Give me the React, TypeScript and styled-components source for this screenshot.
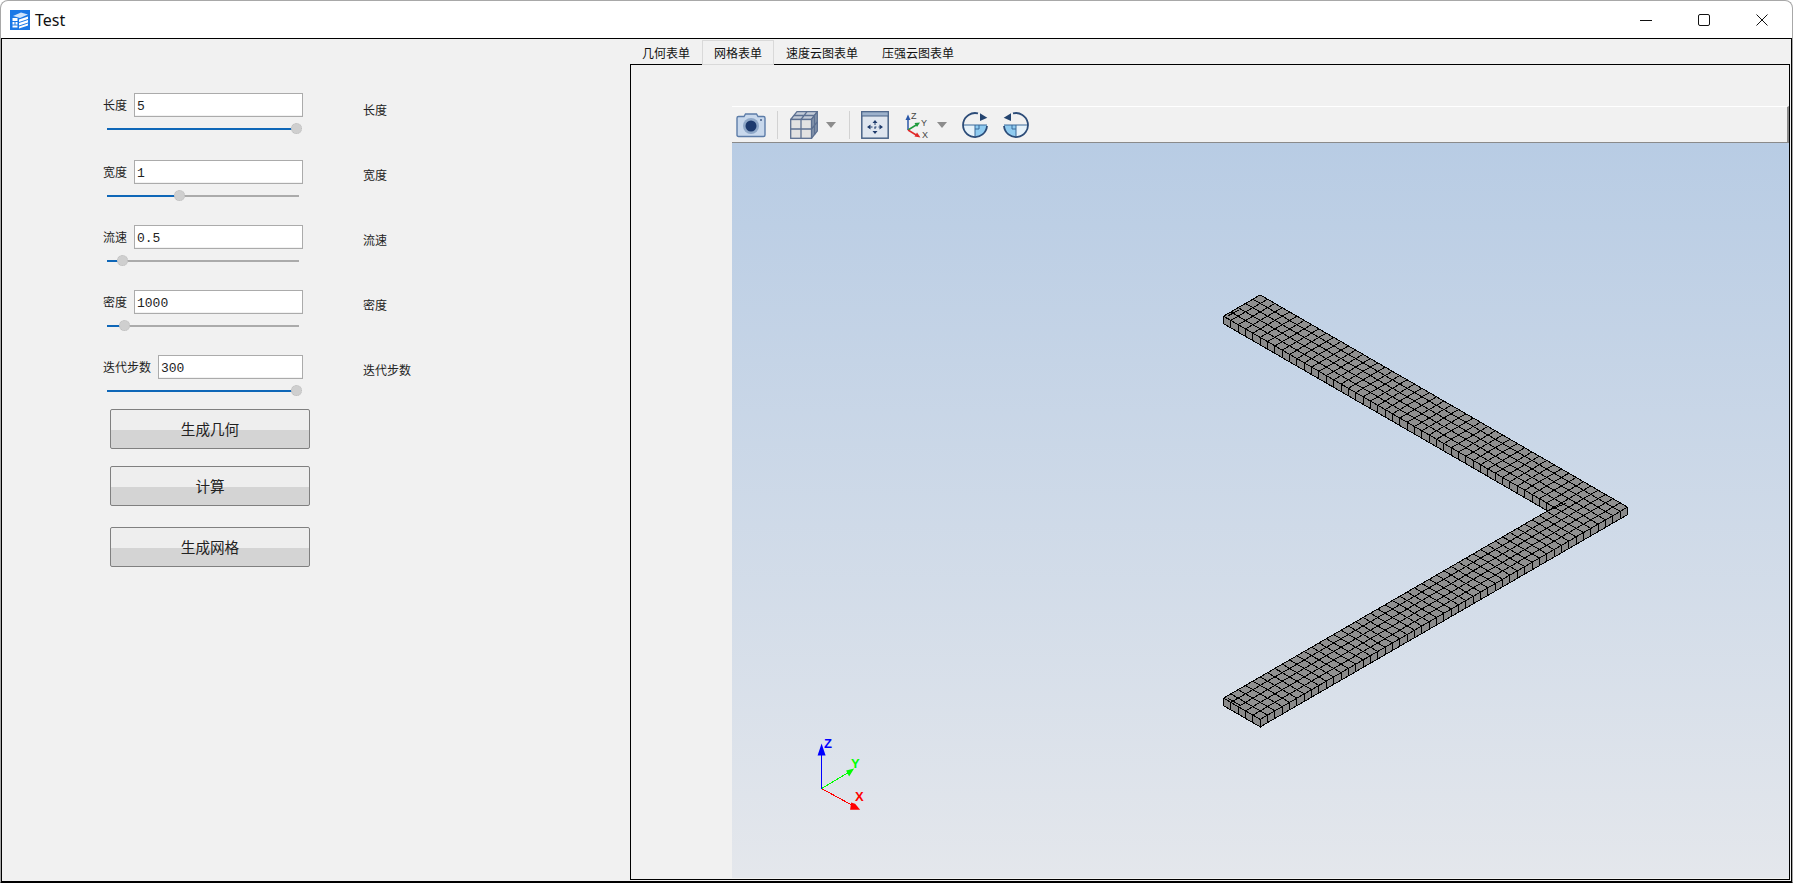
import React from "react";
import styled, { createGlobalStyle } from "styled-components";

const CJK = `"Noto Sans CJK SC", "Noto Sans", sans-serif`;

const Global = createGlobalStyle`
  html, body { margin: 0; padding: 0; background: #ffffff; overflow: hidden; }
  * { box-sizing: border-box; }
`;

const Frame = styled.div`
  width: 1793px;
  height: 883px;
  display: flex;
  flex-direction: column;
  border: 1px solid #a8a8a8;
  border-bottom-color: #000;
  border-radius: 8px 8px 0 0;
  background: #fff;
  overflow: hidden;
`;

const TitleBar = styled.header`
  height: 37px;
  flex: none;
  display: flex;
  align-items: center;
  padding-left: 9px;
`;

const AppIcon = styled.svg`
  width: 20px;
  height: 20px;
  flex: none;
`;

const AppTitle = styled.span`
  margin-left: 5px;
  font: 16px/20px "Noto Sans", sans-serif;
  color: #111;
`;

const WindowControls = styled.div`
  margin-left: auto;
  display: flex;
  align-items: center;
  padding-right: 24px;
  gap: 46px;
`;

const WindowGlyph = styled.svg`
  width: 12px;
  height: 12px;
  display: block;
`;

const Body = styled.main`
  flex: 1;
  min-height: 0;
  display: flex;
  border: 1px solid #000;
  background: #f1f1f1;
`;

const LeftPanel = styled.section`
  width: 628px;
  flex: none;
  padding: 54px 0 0 101px;
  background: #f1f1f1;
`;

const ControlRow = styled.div<{ $height: number }>`
  height: ${(p) => p.$height}px;
  display: flex;
  align-items: flex-start;
`;

const Field = styled.div`
  width: 200px;
  flex: none;
`;

const FieldHead = styled.div`
  display: flex;
  align-items: center;
  gap: 7px;
`;

const FieldLabel = styled.label`
  font: 12px/16px ${CJK};
  color: #222;
  white-space: nowrap;
`;

const FieldInput = styled.input`
  flex: 1;
  min-width: 0;
  height: 24px;
  padding: 3px 2px 0;
  border: 1px solid #ababab;
  box-shadow: inset 0 -1px 0 #f2f2f2;
  outline: none;
  background: #fff;
  color: #222;
  font: 13px/20px "Liberation Mono", monospace;
`;

const Slider = styled.div`
  position: relative;
  width: 192px;
  height: 12px;
  margin: 6px 0 0 4px;
`;

const SliderTrack = styled.div`
  position: absolute;
  left: 0;
  right: 0;
  top: 5px;
  height: 2px;
  background: #ababab;
`;

const SliderFill = styled.div`
  height: 100%;
  background: #0f67b8;
`;

const SliderThumb = styled.div`
  position: absolute;
  top: 0;
  width: 11px;
  height: 11px;
  margin-left: -5px;
  border-radius: 50%;
  background: #cfcfcf;
  border: 1px dotted #bdbdbd;
`;

const SideLabel = styled.span<{ $top: number }>`
  margin: ${(p) => p.$top}px 0 0 60px;
  font: 12px/16px ${CJK};
  color: #222;
  white-space: nowrap;
`;

const ActionButton = styled.button<{ $top: number }>`
  display: block;
  width: 200px;
  height: 40px;
  margin: ${(p) => p.$top}px 0 0 7px;
  padding: 0;
  border: 1px solid #808080;
  border-radius: 2px;
  background: linear-gradient(#eeeeee 0, #eeeeee 20px, #d4d4d4 20px, #d4d4d4 100%);
  color: #222;
  font: 14.6px/20px ${CJK};
`;

const RightPanel = styled.section`
  flex: 1;
  min-width: 0;
  display: flex;
  flex-direction: column;
  padding: 0 1px 1px 0;
`;

const TabBar = styled.nav`
  height: 25px;
  flex: none;
  display: flex;
  align-items: flex-end;
`;

const Tab = styled.div<{ $active?: boolean }>`
  position: relative;
  z-index: 1;
  height: 25px;
  margin-bottom: -1px;
  padding: 0 11px;
  border: 1px solid ${(p) => (p.$active ? "#d9d9d9" : "transparent")};
  background: ${(p) => (p.$active ? "#f1f1f1" : "transparent")};
  color: #111;
  font: 12px/24px ${CJK};
  white-space: nowrap;
`;

const Pane = styled.div`
  flex: 1;
  min-height: 0;
  display: flex;
  flex-direction: column;
  border: 1px solid #000;
  padding: 41px 0 1px 101px;
  background: #f1f1f1;
`;

const Toolbar = styled.div`
  height: 37px;
  flex: none;
  display: flex;
  align-items: center;
  padding-left: 4px;
  border-top: 1px solid #fff;
  border-bottom: 1px solid #8a8a8a;
  border-right: 2px solid #8a8a8a;
  background: #f1f1f1;
`;

const ToolSlot = styled.span<{ $left: number }>`
  display: flex;
  flex: none;
  margin-left: ${(p) => p.$left}px;
`;

const ToolSeparator = styled.span<{ $left: number }>`
  width: 1px;
  height: 28px;
  flex: none;
  margin-left: ${(p) => p.$left}px;
  background: #d2d2d2;
`;

const DropArrow = styled.span<{ $left: number }>`
  flex: none;
  width: 0;
  height: 0;
  margin-left: ${(p) => p.$left}px;
  border-left: 5px solid transparent;
  border-right: 5px solid transparent;
  border-top: 6px solid #8c8c8c;
`;

const ToolIcon = styled.svg<{ $flip?: boolean }>`
  display: block;
  transform: ${(p) => (p.$flip ? "scaleX(-1)" : "none")};
`;

const Canvas = styled.div`
  flex: 1;
  min-height: 0;
  background: linear-gradient(#b8cce4, #e4e7ec);
`;

const Scene = styled.svg`
  display: block;
  width: 100%;
  height: 100%;
`;

/* mesh geometry */
const A = { x: 1223, y: 316 };
const U = { x: 7.34, y: 4.24 };
const V = { x: 7.34, y: -4.24 };
const T = 7.5;
const P = (i: number, j: number, drop = 0) =>
  `${(A.x + i * U.x + j * V.x).toFixed(2)} ${(A.y + i * U.y + j * V.y + drop).toFixed(2)}`;

const topOutline = `M${P(0, 0)}L${P(0, 5)}L${P(50, 5)}L${P(50, -45)}L${P(45, -45)}L${P(45, 0)}Z`;

const buildGrid = () => {
  let d = "";
  for (let j = 1; j <= 4; j++) d += `M${P(0, j)}L${P(50, j)}`;
  for (let i = 1; i <= 44; i++) d += `M${P(i, 0)}L${P(i, 5)}`;
  for (let i = 46; i <= 49; i++) d += `M${P(i, -45)}L${P(i, 5)}`;
  for (let j = -44; j <= 0; j++) d += `M${P(45, j)}L${P(50, j)}`;
  d += `M${P(45, 0)}L${P(45, 5)}`;
  return d;
};

const buildSides = () => {
  let d = "";
  const quad = (a: [number, number], b: [number, number]) => {
    d += `M${P(a[0], a[1])}L${P(b[0], b[1])}L${P(b[0], b[1], T)}L${P(a[0], a[1], T)}Z`;
  };
  for (let i = 0; i < 45; i++) quad([i, 0], [i + 1, 0]);
  for (let i = 45; i < 50; i++) quad([i, -45], [i + 1, -45]);
  for (let j = -45; j < 5; j++) quad([50, j], [50, j + 1]);
  return d;
};

const gridPath = buildGrid();
const sidePath = buildSides();

const controls = [
  { label: "长度", value: "5", fill: 189, height: 67, side: 9 },
  { label: "宽度", value: "1", fill: 72, height: 65, side: 7 },
  { label: "流速", value: "0.5", fill: 15, height: 65, side: 7 },
  { label: "密度", value: "1000", fill: 17, height: 65, side: 7 },
  { label: "迭代步数", value: "300", fill: 189, height: 54, side: 7 },
];

const actions = [
  { label: "生成几何", top: 0 },
  { label: "计算", top: 17 },
  { label: "生成网格", top: 21 },
];

const tabs = ["几何表单", "网格表单", "速度云图表单", "压强云图表单"];

const RotateGlyph: React.FC<{ flip?: boolean }> = ({ flip }) => (
  <ToolIcon $flip={flip} width="28" height="28" viewBox="0 0 28 28">
    <path d="M2 14 H14 V26 A12 12 0 0 1 2 14Z" fill="#e6f2fa" />
    <path d="M14 14 H26 A12 12 0 0 1 14 26Z" fill="#8fcbf0" />
    <path d="M2 14 H26 M14 14 V26" stroke="#3b6a9a" strokeWidth="1" fill="none" />
    <path d="M18 14 V18 H14" stroke="#3b6a9a" strokeWidth="1" fill="none" />
    <path d="M26 15 A12 12 0 1 1 17 2.4" stroke="#2c4c78" strokeWidth="1.8" fill="none" />
    <path d="M19 2.3 L26.3 6.7 L19 10Z" fill="#24446f" />
  </ToolIcon>
);

export default function App() {
  return (
    <>
      <Global />
      <Frame>
        <TitleBar>
          <AppIcon viewBox="0 0 20 20">
            <rect width="20" height="20" fill="#1a78e6" />
            <path d="M3 6 L11 2.5 L18 4.5 L10 8Z" fill="#cfe4fb" />
            <path d="M9 9.5 L18 6.5 V9 L9 12Z M9 13 L18 10 V12.5 L9 15.5Z M9 16.5 L18 13.5 V15.5 L9 18.5Z" fill="#fff" />
            <path d="M2.5 8 H7.5 V11 H2.5Z M2.5 12 H4.5 V14.5 H2.5Z M5.5 12 H7.5 V14.5 H5.5Z M2.5 15.5 H7.5 V17.5 H2.5Z" fill="#fff" />
          </AppIcon>
          <AppTitle>Test</AppTitle>
          <WindowControls>
            <WindowGlyph viewBox="0 0 12 12">
              <path d="M0 6.5 H12" stroke="#111" strokeWidth="1" fill="none" />
            </WindowGlyph>
            <WindowGlyph viewBox="0 0 12 12">
              <rect x="0.5" y="0.5" width="11" height="11" rx="1.5" stroke="#111" strokeWidth="1" fill="none" />
            </WindowGlyph>
            <WindowGlyph viewBox="0 0 12 12">
              <path d="M0.5 0.5 L11.5 11.5 M11.5 0.5 L0.5 11.5" stroke="#111" strokeWidth="1" fill="none" />
            </WindowGlyph>
          </WindowControls>
        </TitleBar>
        <Body>
          <LeftPanel>
            {controls.map((c) => (
              <ControlRow key={c.label} $height={c.height}>
                <Field>
                  <FieldHead>
                    <FieldLabel>{c.label}</FieldLabel>
                    <FieldInput readOnly value={c.value} />
                  </FieldHead>
                  <Slider>
                    <SliderTrack>
                      <SliderFill style={{ width: c.fill }} />
                    </SliderTrack>
                    <SliderThumb style={{ left: c.fill }} />
                  </Slider>
                </Field>
                <SideLabel $top={c.side}>{c.label}</SideLabel>
              </ControlRow>
            ))}
            {actions.map((a) => (
              <ActionButton key={a.label} $top={a.top}>
                {a.label}
              </ActionButton>
            ))}
          </LeftPanel>
          <RightPanel>
            <TabBar>
              {tabs.map((t, i) => (
                <Tab key={t} $active={i === 1}>
                  {t}
                </Tab>
              ))}
            </TabBar>
            <Pane>
              <Toolbar>
                <ToolSlot $left={0}>
                  <ToolIcon width="30" height="26" viewBox="0 0 30 26">
                    <path d="M2.5 4.5 H8 L9.5 2 H20.5 L22 4.5 H27.5 Q29 4.5 29 6 V23 Q29 24.5 27.5 24.5 H2.5 Q1 24.5 1 23 V6 Q1 4.5 2.5 4.5Z" fill="#c8d8ec" stroke="#5c7ca8" strokeWidth="1.4" />
                    <circle cx="15" cy="14" r="8" fill="#8fa8c8" />
                    <circle cx="15" cy="14" r="5.5" fill="#1d3a6e" />
                    <circle cx="25" cy="8" r="1" fill="#47618a" />
                  </ToolIcon>
                </ToolSlot>
                <ToolSeparator $left={11} />
                <ToolSlot $left={12}>
                  <ToolIcon width="28" height="28" viewBox="0 0 28 28">
                    <path d="M0.7 8.5 L7 0.7 H27.3 L21.5 8.5Z" fill="#c4ccd8" stroke="#5c7091" strokeWidth="1.3" />
                    <path d="M21.5 8.5 L27.3 0.7 V20 L21.5 27.3Z" fill="#8696ac" stroke="#5c7091" strokeWidth="1.3" />
                    <rect x="0.7" y="8.5" width="20.8" height="18.8" fill="#e2e2e2" stroke="#5c7091" strokeWidth="1.3" />
                    <path d="M11 8.5 V27.3 M0.7 18 H21.5 M11 8.5 L17 0.7 M4 4.5 H24.5 M24.5 4.5 V24 M21.5 18 L27.3 11" fill="none" stroke="#5c7091" strokeWidth="1.3" />
                  </ToolIcon>
                </ToolSlot>
                <DropArrow $left={8} />
                <ToolSeparator $left={13} />
                <ToolSlot $left={11}>
                  <ToolIcon width="28" height="28" viewBox="0 0 28 28">
                    <rect x="0.8" y="0.8" width="26.4" height="26.4" fill="#dfe6ef" stroke="#4a6488" strokeWidth="1.5" />
                    <rect x="0.8" y="0.8" width="26.4" height="4.2" fill="#9db2cc" stroke="#4a6488" strokeWidth="1" />
                    <path d="M14 9 L11.5 12 H16.5Z M14 23 L11.5 20 H16.5Z M6 16 L9.5 13.5 V18.5Z M22 16 L18.5 13.5 V18.5Z" fill="#1f3c6c" />
                    <path d="M14 12 V20 M9.5 16 H18.5" stroke="#1f3c6c" strokeWidth="1" fill="none" strokeDasharray="2 2" />
                  </ToolIcon>
                </ToolSlot>
                <ToolSlot $left={15}>
                  <ToolIcon width="28" height="28" viewBox="0 0 28 28">
                    <path d="M4 19 V7" stroke="#2a57a8" strokeWidth="1.5" fill="none" />
                    <path d="M4 3.5 L1.5 9 H6.5Z" fill="#2a57a8" />
                    <path d="M4 19 L13 13.5" stroke="#1f9a3c" strokeWidth="1.5" fill="none" />
                    <path d="M16 11.5 L10.5 12 L13 16Z" fill="#1f9a3c" />
                    <path d="M4 19 L13 24.5" stroke="#e02a2a" strokeWidth="1.5" fill="none" />
                    <path d="M16.5 26.5 L10.5 25.5 L13 21.5Z" fill="#e02a2a" />
                    <text x="7" y="8" fontFamily="Liberation Sans, sans-serif" fontSize="9" fill="#444">Z</text>
                    <text x="17" y="15" fontFamily="Liberation Sans, sans-serif" fontSize="9" fill="#444">Y</text>
                    <text x="18" y="27" fontFamily="Liberation Sans, sans-serif" fontSize="9" fill="#444">X</text>
                  </ToolIcon>
                </ToolSlot>
                <DropArrow $left={5} />
                <ToolSlot $left={14}>
                  <RotateGlyph />
                </ToolSlot>
                <ToolSlot $left={13}>
                  <RotateGlyph flip />
                </ToolSlot>
              </Toolbar>
              <Canvas>
                <Scene viewBox="732 143 1056 735" preserveAspectRatio="xMinYMin slice">
                  <g shapeRendering="crispEdges" stroke="#000" strokeWidth="1">
                    <path d={sidePath} fill="#8b8b8b" />
                    <path d={topOutline} fill="#909090" />
                    <path d={gridPath} fill="none" />
                    <path d="M1227 316 L1238 310 M1228 698 L1240 705 M1548 510 L1565 503" fill="none" />
                  </g>
                  <g shapeRendering="crispEdges" strokeWidth="1" fill="none">
                    <path d="M821.5 788 V752" stroke="#0000ff" />
                    <path d="M821.5 788 L848 772" stroke="#00ff00" />
                    <path d="M821.5 788 L851 804" stroke="#ff0000" />
                  </g>
                  <path d="M821.5 743 L825.5 755 H817.5Z" fill="#0000ff" />
                  <path d="M854 768 L846 770 L849 776Z" fill="#00ff00" />
                  <path d="M860 809 L850 809 L851 802 L855 803Z" fill="#ff0000" />
                  <g fontFamily="Liberation Sans, sans-serif" fontSize="13" fontWeight="700">
                    <text x="824" y="747" fill="#0000ff">Z</text>
                    <text x="851" y="767" fill="#00ff00">Y</text>
                    <text x="855" y="800" fill="#ff0000">X</text>
                  </g>
                </Scene>
              </Canvas>
            </Pane>
          </RightPanel>
        </Body>
      </Frame>
    </>
  );
}
